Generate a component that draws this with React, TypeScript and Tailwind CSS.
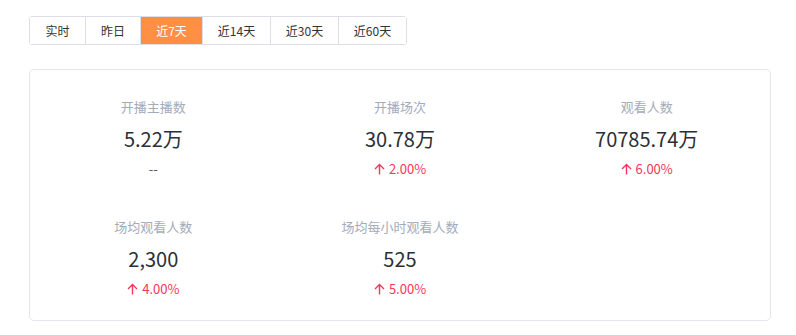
import React, { useState } from 'react';

const tabs = ['实时', '昨日', '近7天', '近14天', '近30天', '近60天'];

type Stat = { label: string; value: string; change?: string };

const stats: Stat[] = [
  { label: '开播主播数', value: '5.22万' },
  { label: '开播场次', value: '30.78万', change: '2.00%' },
  { label: '观看人数', value: '70785.74万', change: '6.00%' },
  { label: '场均观看人数', value: '2,300', change: '4.00%' },
  { label: '场均每小时观看人数', value: '525', change: '5.00%' },
];

const App: React.FC = () => {
  const [active, setActive] = useState(2);

  return (
    <div className="w-[796px] h-[335px] bg-white pt-4 pl-[29px] pr-[25px] font-['Microsoft_YaHei','Noto_Sans_CJK_SC',sans-serif]">
      {/* range tabs */}
      <div className="flex h-[29px] w-fit border border-[#dcdfe6] rounded-[3px] text-[12px]">
        {tabs.map((t, i) => (
          <button
            key={t}
            onClick={() => setActive(i)}
            className={
              (i === active
                ? 'bg-[#ff8f45] text-white '
                : 'bg-white text-[#333] ') +
              (i > 0 ? 'border-l border-[#dcdfe6] ' : '') +
              (i < 2 ? 'w-[55px]' : i === 2 ? 'w-[62px]' : 'w-[68px]')
            }
          >
            {t}
          </button>
        ))}
      </div>

      {/* stats card */}
      <div className="mt-[24px] h-[252px] border border-[#e4e7ed] rounded-[5px] grid grid-cols-3 content-start pt-[27px] gap-y-[38px]">
        {stats.map(s => (
          <div key={s.label} className="flex flex-col items-center">
            <div className="text-[13px] leading-[20px] text-[#a3abba]">{s.label}</div>
            <div className="mt-[11px] text-[20px] leading-[22px] text-[#2b2f36]">{s.value}</div>
            <div className="mt-[9px] text-[13px] leading-[20px]">
              {s.change ? (
                <span className="text-[#f5365c] flex items-center gap-[4px]">
                  <svg width="11" height="12" viewBox="0 0 11 12" fill="none" stroke="currentColor" strokeWidth="1.4">
                    <path d="M5.5 11.5V1.5M1 6l4.5-4.5L10 6" />
                  </svg>
                  {s.change}
                </span>
              ) : (
                <span className="text-[#555]">--</span>
              )}
            </div>
          </div>
        ))}
      </div>
    </div>
  );
};

export default App;
